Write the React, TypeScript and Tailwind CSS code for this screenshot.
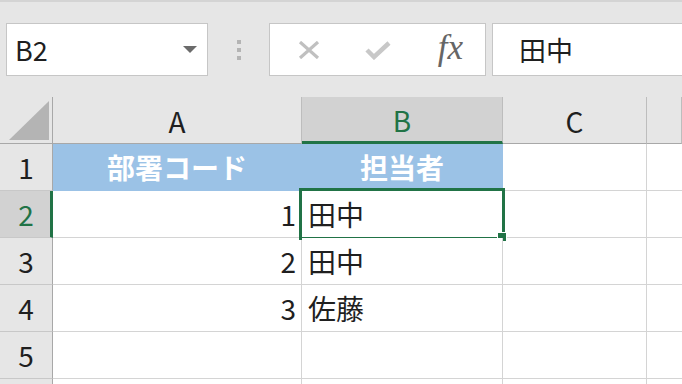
import React from 'react';

const cols = ['A', 'B', 'C', ''];

const rows: { n: string; a: string; b: string }[] = [
  { n: '2', a: '1', b: '田中' },
  { n: '3', a: '2', b: '田中' },
  { n: '4', a: '3', b: '佐藤' },
  { n: '5', a: '', b: '' },
  { n: '', a: '', b: '' },
];

const App: React.FC = () => {
  return (
    <div className="w-[682px] h-[384px] overflow-hidden bg-[#e6e6e6] flex flex-col font-['Noto_Sans_CJK_JP',sans-serif] text-[#1f1f1f]">
      <div className="h-[2px] bg-[#d4d4d4] shrink-0" />

      {/* Formula bar */}
      <div className="flex h-[53px] mt-[21px] pl-[6px] shrink-0">
        <div className="w-[202px] h-full bg-white border border-[#c6c6c6] flex items-center justify-between pl-[8px] pr-[10px]">
          <span className="text-[27px] leading-none">B2</span>
          <svg width="14" height="8" viewBox="0 0 14 8">
            <path d="M0 0 L14 0 L7 7 Z" fill="#6b6b6b" />
          </svg>
        </div>
        <div className="w-[61px] flex flex-col items-center justify-center gap-[4px]">
          <div className="w-[4px] h-[4px] bg-[#b4b4b4]" />
          <div className="w-[4px] h-[4px] bg-[#b4b4b4]" />
          <div className="w-[4px] h-[4px] bg-[#b4b4b4]" />
        </div>
        <div className="w-[217px] h-full bg-white border border-[#c6c6c6] flex items-center">
          <div className="w-[50px] flex justify-end">
            <svg width="22" height="18" viewBox="0 0 22 18">
              <path d="M2 1 L20 17 M20 1 L2 17" stroke="#c0c0c0" strokeWidth="3.2" />
            </svg>
          </div>
          <div className="w-[71px] flex justify-end">
            <svg width="26" height="20" viewBox="0 0 26 20">
              <path d="M2 10 L9 17 L24 3" stroke="#c8c8c8" strokeWidth="4.5" fill="none" />
            </svg>
          </div>
          <div className="flex-1 flex justify-end pr-[22px]">
            <span className="font-['Liberation_Serif',serif] italic text-[35px] leading-none text-[#666666] -mt-[5px]">fx</span>
          </div>
        </div>
        <div className="flex-1 ml-[6px] h-full bg-white border border-r-0 border-[#c6c6c6] flex items-center pl-[26px]">
          <span className="text-[27px] leading-none">田中</span>
        </div>
      </div>

      <div className="h-[21px] shrink-0" />

      {/* Sheet grid */}
      <div className="grid grid-cols-[53px_249px_201px_144px_1fr] auto-rows-[47px] text-[28px] leading-none">
        {/* header row */}
        <div className="border-r border-b border-[#a8a8a8] flex items-end justify-end pr-[3px] pb-[3px]">
          <svg width="40" height="39" viewBox="0 0 40 39">
            <path d="M40 0 L40 39 L0 39 Z" fill="#b4b4b4" />
          </svg>
        </div>
        {cols.map((c, i) =>
          c === 'B' ? (
            <div
              key={i}
              className="bg-[#d2d2d2] border-r border-r-[#bdbdbd] border-b-[3px] border-b-[#217346] flex items-center justify-center text-[#217346] pt-[2px]"
            >
              {c}
            </div>
          ) : (
            <div
              key={i}
              className="border-r border-r-[#bdbdbd] border-b border-b-[#a8a8a8] flex items-center justify-center pt-[1px]"
            >
              {c}
            </div>
          )
        )}

        {/* row 1 */}
        <div className="border-r border-r-[#a8a8a8] border-b border-b-[#c8c8c8] flex items-center justify-center">1</div>
        <div className="bg-[#9bc2e6] border-r border-b border-[#9bc2e6] flex items-center justify-center text-white font-bold">
          部署コード
        </div>
        <div className="bg-[#9bc2e6] border-r border-b border-[#9bc2e6] flex items-center justify-center text-white font-bold">
          担当者
        </div>
        <div className="bg-white border-r border-b border-[#d4d4d4]" />
        <div className="bg-white border-b border-[#d4d4d4]" />

        {rows.map((r, i) => {
          const sel = r.n === '2';
          return (
            <React.Fragment key={i}>
              {sel ? (
                <div className="bg-[#d2d2d2] border-r-[3px] border-r-[#217346] border-b border-b-[#c8c8c8] flex items-center justify-center pl-[2px] text-[#217346]">
                  {r.n}
                </div>
              ) : (
                <div className="border-r border-r-[#a8a8a8] border-b border-b-[#c8c8c8] flex items-center justify-center">
                  {r.n}
                </div>
              )}
              <div className="bg-white border-r border-b border-[#d4d4d4] flex items-center justify-end pr-[5px]">
                {r.a}
              </div>
              <div className="relative bg-white border-r border-b border-[#d4d4d4] flex items-center pl-[6px]">
                {r.b}
                {sel && (
                  <>
                    <div className="absolute -left-[3px] -top-[3px] w-[206px] h-[52px] border-[3px] border-[#217346]" />
                    <div className="absolute left-[195px] top-[41px] w-[10px] h-[10px] bg-[#217346] border border-white" />
                  </>
                )}
              </div>
              <div className="bg-white border-r border-b border-[#d4d4d4]" />
              <div className="bg-white border-b border-[#d4d4d4]" />
            </React.Fragment>
          );
        })}
      </div>
    </div>
  );
};

export default App;
